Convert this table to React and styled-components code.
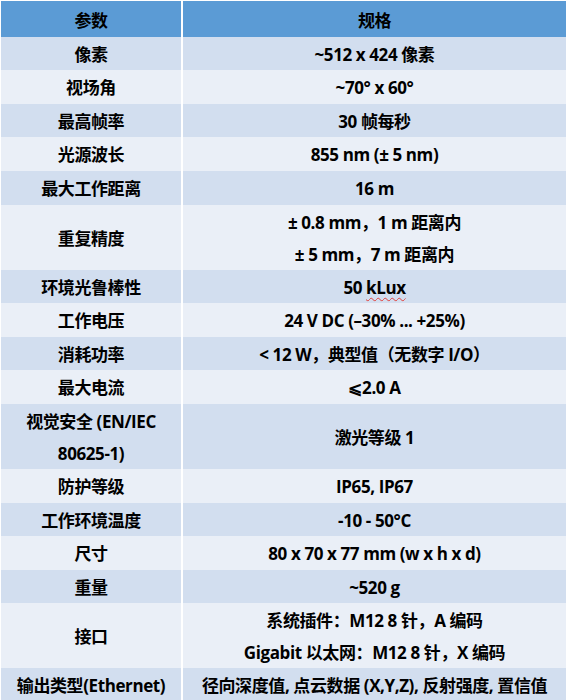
import React from 'react';
import styled, { createGlobalStyle } from 'styled-components';

const Global = createGlobalStyle`
  body {
    margin: 0;
    background: #ffffff;
    font-family: "Open Sans", "Noto Sans CJK SC", sans-serif;
  }
`;

const Table = styled.div`
  width: 565px;
  padding: 1px 0 0 1px;
  display: flex;
  flex-direction: column;
  gap: 2px;
`;

const Row = styled.div`
  display: grid;
  grid-template-columns: 180px 383px;
  column-gap: 2px;
  height: ${p => (p.$tall ? '63px' : '31.6px')};
  margin-bottom: ${p => (p.$head ? '2px' : '0')};
`;

const Cell = styled.div`
  display: flex;
  flex-direction: column;
  align-items: center;
  justify-content: center;
  text-align: center;
  padding-top: ${p => (p.$head ? '4px' : '2px')};
  box-sizing: border-box;
  background: ${p => (p.$head ? '#5b9bd5' : p.$dark ? '#d2deef' : '#eaeff7')};
  color: #000;
  font-weight: 700;
  font-size: 17px;
  line-height: 32px;
  letter-spacing: -0.4px;
  white-space: nowrap;
`;

const Squiggle = styled.span`
  text-decoration: underline wavy #e0403a;
  text-decoration-thickness: 1px;
  text-underline-offset: 3px;
`;

const rows = [
  ['像素', ['~512 x 424 像素']],
  ['视场角', ['~70° x 60°']],
  ['最高帧率', ['30 帧每秒']],
  ['光源波长', ['855 nm (± 5 nm)']],
  ['最大工作距离', ['16 m']],
  ['重复精度', ['± 0.8 mm，1 m 距离内', '± 5 mm，7 m 距离内']],
  ['环境光鲁棒性', [<>50 <Squiggle>kLux</Squiggle></>]],
  ['工作电压', ['24 V DC (–30% ... +25%)']],
  ['消耗功率', ['< 12 W，典型值（无数字 I/O）']],
  ['最大电流', ['⩽2.0 A']],
  [['视觉安全 (EN/IEC', '80625-1)'], ['激光等级 1']],
  ['防护等级', ['IP65, IP67']],
  ['工作环境温度', ['-10 - 50°C']],
  ['尺寸', ['80 x 70 x 77 mm (w x h x d)']],
  ['重量', ['~520 g']],
  ['接口', ['系统插件：M12 8 针，A 编码', 'Gigabit 以太网：M12 8 针，X 编码']],
  ['输出类型(Ethernet)', ['径向深度值, 点云数据 (X,Y,Z), 反射强度, 置信值']],
];

const lines = v => (Array.isArray(v) ? v : [v]).map((t, i) => <div key={i}>{t}</div>);

export default function App() {
  return (
    <>
      <Global />
      <Table>
        <Row $head>
          <Cell $head>参数</Cell>
          <Cell $head>规格</Cell>
        </Row>
        {rows.map(([name, spec], i) => {
          const tall = Array.isArray(name) || spec.length > 1;
          const dark = i % 2 === 0;
          return (
            <Row key={i} $tall={tall}>
              <Cell $dark={dark}>{lines(name)}</Cell>
              <Cell $dark={dark}>{lines(spec)}</Cell>
            </Row>
          );
        })}
      </Table>
    </>
  );
}
